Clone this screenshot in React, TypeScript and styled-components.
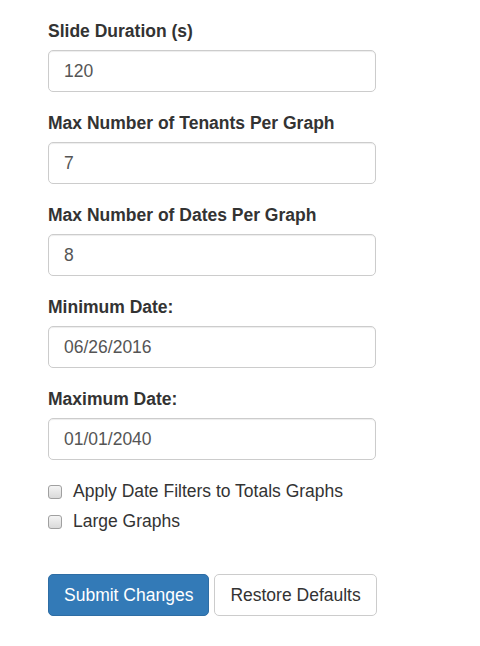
import styled, { createGlobalStyle } from "styled-components";

const GlobalStyle = createGlobalStyle`
  html, body {
    margin: 0;
    padding: 0;
    background: #fff;
  }
  body {
    font-family: "Liberation Sans", Arial, Helvetica, sans-serif;
    font-size: 17.5px;
    line-height: 1.42857;
    color: #333;
  }
  * { box-sizing: border-box; }
`

const Page = styled.form`
  width: 328px;
  margin-left: 48px;
  padding-top: 19px;
`

const FormGroup = styled.div`
  margin-bottom: 19px;
`

const Label = styled.label`
  display: block;
  font-weight: bold;
  line-height: 25px;
  margin-bottom: 6px;
`

const Input = styled.input`
  display: block;
  width: 100%;
  height: 42px;
  padding: 8px 15px;
  font-family: inherit;
  font-size: 17.5px;
  color: #555;
  background: #fff;
  border: 1px solid #ccc;
  border-radius: 5px;
  box-shadow: inset 0 1px 1px rgba(0, 0, 0, 0.075);
  outline: none;
`

const CheckRow = styled.label`
  display: flex;
  align-items: center;
  height: 25px;
  margin-bottom: 5px;
  cursor: pointer;
`

const CheckBox = styled.input`
  appearance: none;
  width: 14px;
  height: 14px;
  margin: 0 11px 0 0;
  border: 1px solid #a0a0a0;
  border-radius: 3px;
  background: linear-gradient(#f4f4f4, #dadada);
`

const Buttons = styled.div`
  display: flex;
  gap: 5px;
  margin-top: 40px;
`

const Button = styled.button<{ $primary?: boolean }>`
  flex: none;
  white-space: nowrap;
  height: 42px;
  padding: 0 15px;
  font-family: inherit;
  font-size: 17.5px;
  border-radius: 5px;
  border: 1px solid ${p => (p.$primary ? "#2e6da4" : "#ccc")};
  background: ${p => (p.$primary ? "#337ab7" : "#fff")};
  color: ${p => (p.$primary ? "#fff" : "#333")};
  cursor: pointer;
`

const fields = [
  { label: "Slide Duration (s)", value: "120" },
  { label: "Max Number of Tenants Per Graph", value: "7" },
  { label: "Max Number of Dates Per Graph", value: "8" },
  { label: "Minimum Date:", value: "06/26/2016" },
  { label: "Maximum Date:", value: "01/01/2040" },
]

export default function App() {
  return (
    <>
      <GlobalStyle />
      <Page onSubmit={e => e.preventDefault()}>
        {fields.map(f => (
          <FormGroup key={f.label}>
            <Label>{f.label}</Label>
            <Input type="text" defaultValue={f.value} />
          </FormGroup>
        ))}
        <CheckRow>
          <CheckBox type="checkbox" />
          Apply Date Filters to Totals Graphs
        </CheckRow>
        <CheckRow>
          <CheckBox type="checkbox" />
          Large Graphs
        </CheckRow>
        <Buttons>
          <Button $primary type="submit">Submit Changes</Button>
          <Button type="button">Restore Defaults</Button>
        </Buttons>
      </Page>
    </>
  );
}
